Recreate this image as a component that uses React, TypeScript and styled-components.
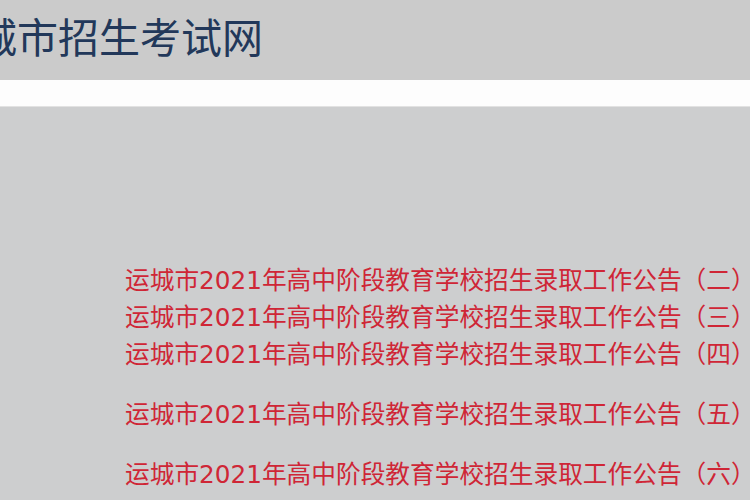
import React from "react";
import styled, { createGlobalStyle } from "styled-components";

const GlobalStyle = createGlobalStyle`
  html, body {
    margin: 0;
    padding: 0;
    background: #cdcecf;
    overflow: hidden;
  }
  body {
    font-family: "Noto Sans CJK SC", "Noto Sans", sans-serif;
  }
`;

type Notice = {
  title: string;
  spaced?: boolean;
};

const notices: Notice[] = [
  { title: "运城市2021年高中阶段教育学校招生录取工作公告（二）" },
  { title: "运城市2021年高中阶段教育学校招生录取工作公告（三）" },
  { title: "运城市2021年高中阶段教育学校招生录取工作公告（四）" },
  { title: "运城市2021年高中阶段教育学校招生录取工作公告（五）", spaced: true },
  { title: "运城市2021年高中阶段教育学校招生录取工作公告（六）", spaced: true },
];

function App(): React.ReactElement {
  return (
    <Page>
      <GlobalStyle />
      <Header>
        <SiteTitle>运城市招生考试网</SiteTitle>
      </Header>
      <NavStrip />
      <Content>
        <NoticeList>
          {notices.map((n, i) => (
            <NoticeItem key={i} $spaced={n.spaced}>
              {n.title}
            </NoticeItem>
          ))}
        </NoticeList>
      </Content>
    </Page>
  );
}

export default App;

const Page = styled.div`
  width: 750px;
  height: 500px;
  overflow: hidden;
  background: #cdcecf;
`;

const Header = styled.div`
  height: 80px;
  background: #cbcbcb;
  overflow: hidden;
  white-space: nowrap;
`;

const SiteTitle = styled.h1`
  margin: 0 0 0 -65px;
  padding-top: 9px;
  font-size: 41px;
  line-height: 52px;
  font-weight: 400;
  color: #22385a;
`;

const NavStrip = styled.div`
  height: 26px;
  background: #fdfdfd;
  border-bottom: 1px solid #e2e2e2;
`;

const Content = styled.div`
  padding: 155px 0 0 125px;
`;

const NoticeList = styled.ul`
  list-style: none;
  margin: 0;
  padding: 0;
`;

const NoticeItem = styled.li<{ $spaced?: boolean }>`
  font-family: "DejaVu Sans", "Noto Sans CJK SC", sans-serif;
  font-size: 24.7px;
  line-height: 37px;
  color: #cf2636;
  white-space: nowrap;
  margin-top: ${(p) => (p.$spaced ? "23px" : "0")};
`;
